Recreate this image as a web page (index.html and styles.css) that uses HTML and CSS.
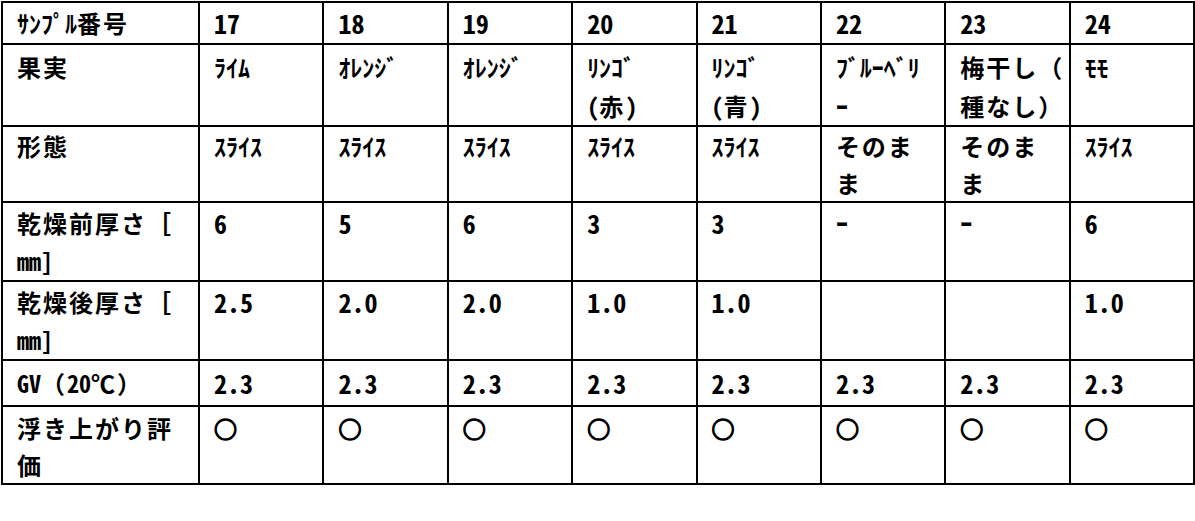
FILE: index.html
```html
<!DOCTYPE html>
<html lang="ja">
<head>
<meta charset="utf-8">
<title>サンプル表</title>
<link rel="stylesheet" href="styles.css">
</head>
<body>
<table class="grid">
  <colgroup>
    <col class="c-head">
    <col class="c-val"><col class="c-val"><col class="c-val"><col class="c-val">
    <col class="c-val"><col class="c-val"><col class="c-val"><col class="c-val">
  </colgroup>
  <tbody>
    <tr class="r1">
      <td>ｻﾝﾌﾟﾙ<span class="fw">番号</span></td><td class="num">17</td><td class="num">18</td><td class="num">19</td><td class="num">20</td><td class="num">21</td><td class="num">22</td><td class="num">23</td><td class="num">24</td>
    </tr>
    <tr class="r2">
      <td><span class="fw">果実</span></td><td>ﾗｲﾑ</td><td>ｵﾚﾝｼﾞ</td><td>ｵﾚﾝｼﾞ</td><td>ﾘﾝｺﾞ<br><span class="hw">(</span><span class="fw">赤</span><span class="hw">)</span></td><td>ﾘﾝｺﾞ<br><span class="hw">(</span><span class="fw">青</span><span class="hw">)</span></td><td>ﾌﾞﾙｰﾍﾞﾘ<br>ｰ</td><td><span class="fw">梅干し（<br>種なし）</span></td><td>ﾓﾓ</td>
    </tr>
    <tr class="r3">
      <td><span class="fw">形態</span></td><td>ｽﾗｲｽ</td><td>ｽﾗｲｽ</td><td>ｽﾗｲｽ</td><td>ｽﾗｲｽ</td><td>ｽﾗｲｽ</td><td><span class="fw">そのま<br>ま</span></td><td><span class="fw">そのま<br>ま</span></td><td>ｽﾗｲｽ</td>
    </tr>
    <tr class="r4">
      <td><span class="fw">乾燥前厚さ［</span><br><span class="hw">mm]</span></td><td class="num">6</td><td class="num">5</td><td class="num">6</td><td class="num">3</td><td class="num">3</td><td>ｰ</td><td>ｰ</td><td class="num">6</td>
    </tr>
    <tr class="r5">
      <td><span class="fw">乾燥後厚さ［</span><br><span class="hw">mm]</span></td><td class="num">2.5</td><td class="num">2.0</td><td class="num">2.0</td><td class="num">1.0</td><td class="num">1.0</td><td></td><td></td><td class="num">1.0</td>
    </tr>
    <tr class="r6">
      <td><span class="hw">GV</span><span class="fw">（</span><span class="hw">20</span><span class="fw">℃）</span></td><td class="num">2.3</td><td class="num">2.3</td><td class="num">2.3</td><td class="num">2.3</td><td class="num">2.3</td><td class="num">2.3</td><td class="num">2.3</td><td class="num">2.3</td>
    </tr>
    <tr class="r7">
      <td><span class="fw">浮き上がり評<br>価</span></td><td><span class="mark">○</span></td><td><span class="mark">○</span></td><td><span class="mark">○</span></td><td><span class="mark">○</span></td><td><span class="mark">○</span></td><td><span class="mark">○</span></td><td><span class="mark">○</span></td><td><span class="mark">○</span></td>
    </tr>
  </tbody>
</table>
</body>
</html>
```

FILE: styles.css
```css
html, body {
  margin: 0;
  padding: 0;
  background: #ffffff;
}

body {
  padding: 1px 0 0 1px;
  font-family: "Noto Sans CJK JP", "Noto Sans", sans-serif;
  color: #000000;
}

.grid {
  width: 1194px;
  table-layout: fixed;
  border-collapse: separate;
  border-spacing: 0;
  border-top: 2px solid #000;
  border-left: 2px solid #000;
}

.c-head { width: 197px; }
.c-val { width: 124.375px; }

.grid td {
  box-sizing: border-box;
  border-right: 2px solid #000;
  border-bottom: 2px solid #000;
  padding: 1px 2px 0 14px;
  vertical-align: top;
  font-size: 24px;
  font-weight: 700;
  line-height: 38px;
  white-space: nowrap;
  overflow: hidden;
}

.fw {
  letter-spacing: 2px;
}

.hw,
.grid td.num {
  font-feature-settings: "hwid" 1;
}

.grid td.num {
  font-size: 26px;
}

.mark {
  display: inline-block;
  font-size: 23px;
  -webkit-text-stroke: 1.4px #000;
}

.r1 td { height: 42px; line-height: 40px; padding-top: 0; }
.r2 td { height: 81px; line-height: 39px; padding-top: 2px; }
.r3 td { height: 76px; line-height: 37px; padding-top: 0; }
.r4 td { height: 79px; }
.r5 td { height: 78px; }
.r6 td { height: 46px; line-height: 40px; padding-top: 2px; }
.r7 td { height: 77px; line-height: 37px; padding-top: 2px; }
```
